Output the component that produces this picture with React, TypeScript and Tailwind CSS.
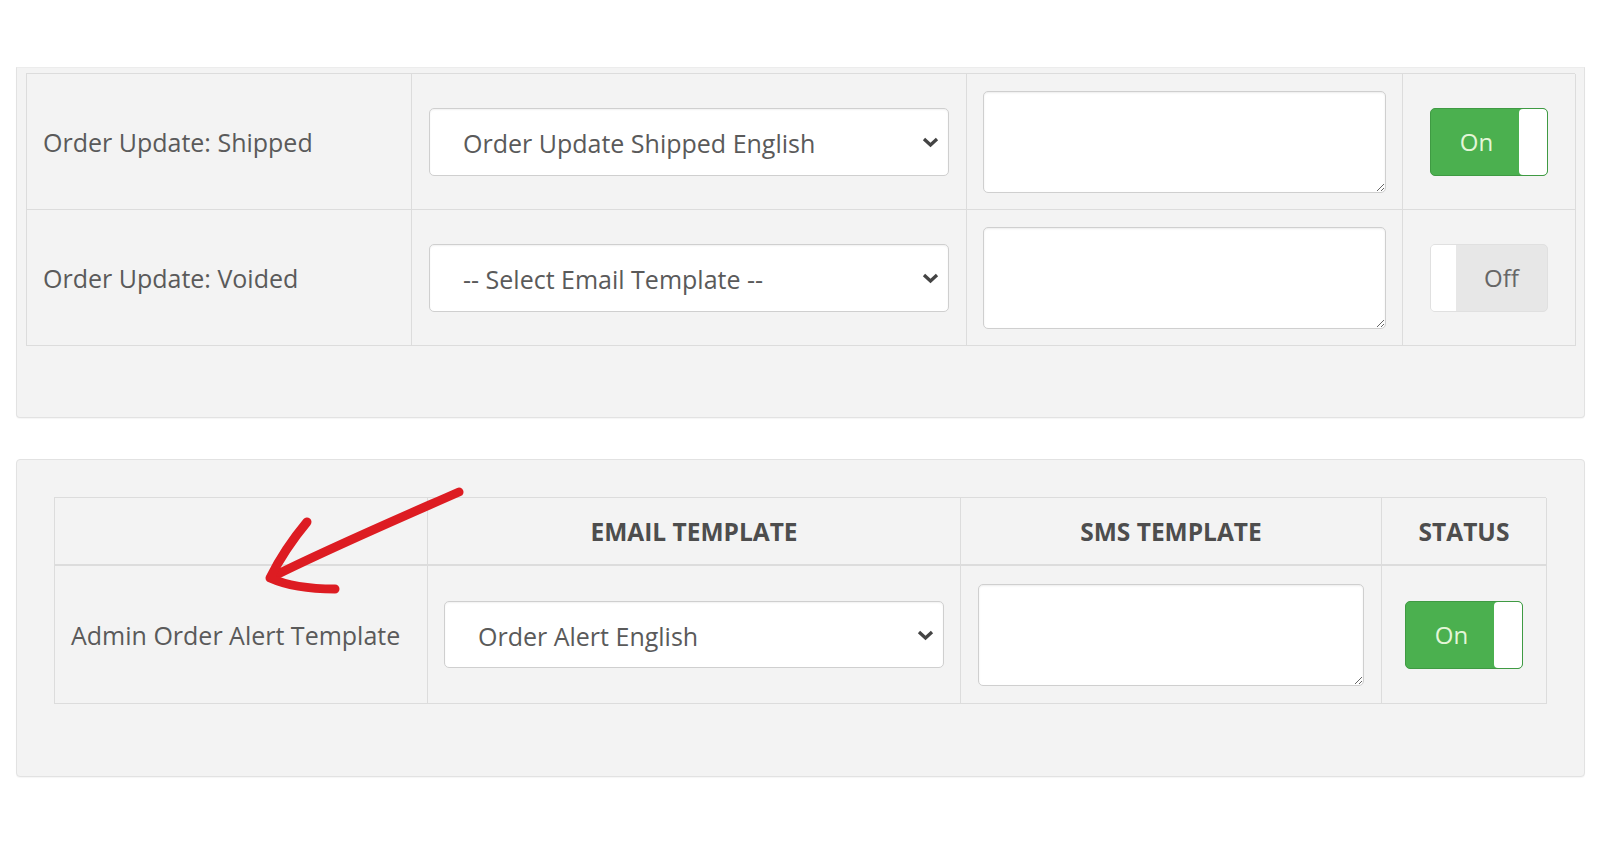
import React from "react";

const topRows = [
  { label: "Order Update: Shipped", template: "Order Update Shipped English", on: true },
  { label: "Order Update: Voided", template: "-- Select Email Template --", on: false },
];

function Chevron() {
  return (
    <svg
      className="pointer-events-none absolute right-[10px] top-1/2 -translate-y-1/2"
      width="17"
      height="12"
      viewBox="0 0 17 12"
    >
      <path d="M2 3 L8.5 9 L15 3" fill="none" stroke="#444" strokeWidth="3.3" strokeLinejoin="miter" />
    </svg>
  );
}

function TemplateSelect({ value, h = "h-[68px]" }: { value: string; h?: string }) {
  return (
    <div className="relative w-full">
      <select
        defaultValue={value}
        className={`${h} w-full appearance-none rounded-[5px] border border-[#cfcfcf] bg-white pl-[33px] pr-10 pt-[4px] text-[25px] text-[#5a5a5a] shadow-[inset_0_1px_2px_rgba(0,0,0,0.06)] outline-none`}
      >
        <option>{value}</option>
      </select>
      <Chevron />
    </div>
  );
}

function SmsBox() {
  return (
    <textarea className="h-[102px] w-full rounded-[5px] border border-[#cfcfcf] bg-white shadow-[inset_0_1px_2px_rgba(0,0,0,0.08)] outline-none" />
  );
}

function Toggle({ on }: { on: boolean }) {
  if (on) {
    return (
      <div className="flex h-[68px] w-[118px] overflow-hidden rounded-[5px] border border-[#3f9a43] bg-[#4bb04f]">
        <div className="flex flex-1 items-center justify-center pl-[3px] text-[24px] text-[#e4f6d8]">On</div>
        <div className="w-[28px] rounded-[4px] bg-white" />
      </div>
    );
  }
  return (
    <div className="flex h-[68px] w-[118px] overflow-hidden rounded-[5px] border border-[#e0e0e0] bg-[#e7e7e7]">
      <div className="w-[25px] bg-white" />
      <div className="flex flex-1 items-center justify-center text-[24px] text-[#666]">Off</div>
    </div>
  );
}

export default function App() {
  return (
    <div className="relative h-[856px] w-[1600px] overflow-hidden bg-white font-['Open_Sans',sans-serif]">
      <div className="pt-[67px]">
        {/* Upper panel, cut off at the top */}
        <div className="ml-[16px] mr-[15px] rounded-b-[4px] border border-t-[#ececec] border-[#e2e2e2] bg-[#f3f3f3] px-[9px] pt-[5px] pb-[71px] shadow-[0_1px_1px_rgba(0,0,0,0.04)]">
          <div className="grid grid-cols-[385px_555px_436px_173px] border-l border-t border-[#dcdcdc]">
            {topRows.map((row) => (
              <React.Fragment key={row.label}>
                <div className="flex h-[136px] items-center border-b border-r border-[#dcdcdc] px-[16px] pt-[3px] text-[25px] text-[#5a5a5a]">
                  {row.label}
                </div>
                <div className="flex h-[136px] items-center border-b border-r border-[#dcdcdc] px-[17px]">
                  <TemplateSelect value={row.template} />
                </div>
                <div className="flex h-[136px] items-center border-b border-r border-[#dcdcdc] px-[16px]">
                  <SmsBox />
                </div>
                <div className="flex h-[136px] items-center justify-center border-b border-r border-[#dcdcdc]">
                  <Toggle on={row.on} />
                </div>
              </React.Fragment>
            ))}
          </div>
        </div>

        {/* Admin alert panel */}
        <div className="ml-[16px] mr-[15px] mt-[41px] rounded-[4px] border border-[#e2e2e2] bg-[#f3f3f3] pl-[37px] pr-[38px] pt-[37px] pb-[72px] shadow-[0_1px_1px_rgba(0,0,0,0.04)]">
          <div className="grid grid-cols-[373px_533px_421px_165px] border-l border-t border-[#dcdcdc]">
            <div className="h-[68px] border-b-2 border-r border-[#dcdcdc]" />
            <div className="flex h-[68px] items-center justify-center border-b-2 border-r border-[#dcdcdc] pt-[2px] text-[24.5px] font-bold text-[#4d4d4d]">
              EMAIL TEMPLATE
            </div>
            <div className="flex h-[68px] items-center justify-center border-b-2 border-r border-[#dcdcdc] pt-[2px] text-[24.5px] font-bold text-[#4d4d4d]">
              SMS TEMPLATE
            </div>
            <div className="flex h-[68px] items-center justify-center border-b-2 border-r border-[#dcdcdc] pt-[2px] text-[24.5px] font-bold text-[#4d4d4d]">
              STATUS
            </div>

            <div className="flex h-[138px] items-center border-b border-r border-[#dcdcdc] px-[16px] pt-[3px] text-[25px] text-[#5a5a5a]">
              Admin Order Alert Template
            </div>
            <div className="flex h-[138px] items-center border-b border-r border-[#dcdcdc] px-[16px]">
              <TemplateSelect value="Order Alert English" h="h-[67px]" />
            </div>
            <div className="flex h-[138px] items-center border-b border-r border-[#dcdcdc] px-[17px]">
              <SmsBox />
            </div>
            <div className="flex h-[138px] items-center justify-center border-b border-r border-[#dcdcdc]">
              <Toggle on />
            </div>
          </div>
        </div>
      </div>

      {/* red hand-drawn arrow annotation */}
      <svg className="pointer-events-none absolute left-0 top-0" width="1600" height="856">
        <g fill="none" stroke="#dd1c22" strokeWidth="9" strokeLinecap="round" strokeLinejoin="round">
          <path d="M459 492 C 400 518, 330 548, 272 577" />
          <path d="M307 522 C 292 540, 280 558, 270 578 C 290 587, 312 589, 335 589" />
        </g>
      </svg>
    </div>
  );
}
